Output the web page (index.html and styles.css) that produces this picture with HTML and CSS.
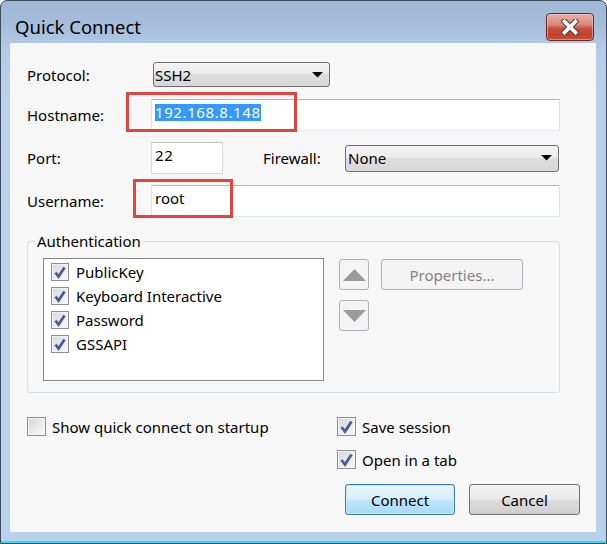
FILE: index.html
```html
<!DOCTYPE html>
<html>
<head>
<meta charset="utf-8">
<title>Quick Connect</title>
<link rel="stylesheet" href="styles.css">
</head>
<body>
<div class="window">
  <div class="titlebar">
    <span class="title">Quick Connect</span>
    <div class="close">
      <svg width="18" height="16" viewBox="0 0 18 16">
        <path d="M3.5 2.5 L14.5 13.5 M14.5 2.5 L3.5 13.5" stroke="#5a4a48" stroke-width="6" stroke-linecap="square"/>
        <path d="M3.5 2.5 L14.5 13.5 M14.5 2.5 L3.5 13.5" stroke="#ffffff" stroke-width="3.6" stroke-linecap="square"/>
      </svg>
    </div>
  </div>
  <div class="client">
    <div class="fields">
      <div class="row row-protocol">
        <span class="lbl">Protocol:</span>
        <div class="select sel-protocol"><span class="sel-text">SSH2</span><svg class="caret" width="11" height="6" viewBox="0 0 11 6"><polygon points="0,0 11,0 5.5,5.5" fill="#000"/></svg></div>
      </div>
      <div class="row">
        <span class="lbl">Hostname:</span>
        <div class="input wide"><span class="selected">192.168.8.148</span></div>
        <span class="mark mark-host"></span>
      </div>
      <div class="row">
        <span class="lbl">Port:</span>
        <div class="input port"><span class="digits">22</span></div>
        <span class="lbl-fw">Firewall:</span>
        <div class="select sel-fw"><span class="sel-text">None</span><svg class="caret" width="11" height="6" viewBox="0 0 11 6"><polygon points="0,0 11,0 5.5,5.5" fill="#000"/></svg></div>
      </div>
      <div class="row">
        <span class="lbl">Username:</span>
        <div class="input wide"><span>root</span></div>
        <span class="mark mark-user"></span>
      </div>
    </div>

    <fieldset class="group">
      <legend>Authentication</legend>
      <div class="group-body">
        <div class="listbox">
          <div class="item"><span class="cb"><svg width="18" height="18" viewBox="0 0 18 18"><polyline points="4.5,9.5 7.5,13.5 13.5,4.5" fill="none" stroke="#4b5d94" stroke-width="2.8"/></svg></span><span>PublicKey</span></div>
          <div class="item"><span class="cb"><svg width="18" height="18" viewBox="0 0 18 18"><polyline points="4.5,9.5 7.5,13.5 13.5,4.5" fill="none" stroke="#4b5d94" stroke-width="2.8"/></svg></span><span>Keyboard Interactive</span></div>
          <div class="item"><span class="cb"><svg width="18" height="18" viewBox="0 0 18 18"><polyline points="4.5,9.5 7.5,13.5 13.5,4.5" fill="none" stroke="#4b5d94" stroke-width="2.8"/></svg></span><span>Password</span></div>
          <div class="item"><span class="cb"><svg width="18" height="18" viewBox="0 0 18 18"><polyline points="4.5,9.5 7.5,13.5 13.5,4.5" fill="none" stroke="#4b5d94" stroke-width="2.8"/></svg></span><span>GSSAPI</span></div>
        </div>
        <div class="arrows">
          <div class="btn-dis arrow"><svg width="23" height="12" viewBox="0 0 23 12"><polygon points="11.5,0 23,12 0,12" fill="#9b9b9b"/></svg></div>
          <div class="btn-dis arrow"><svg width="23" height="12" viewBox="0 0 23 12"><polygon points="0,0 23,0 11.5,12" fill="#9b9b9b"/></svg></div>
        </div>
        <div class="btn-dis props">Properties...</div>
      </div>
    </fieldset>

    <div class="options">
      <div class="opt"><span class="cb cb-lg"></span><span>Show quick connect on startup</span></div>
      <div class="opt"><span class="cb cb-lg"><svg width="19" height="19" viewBox="0 0 19 19"><polyline points="4.5,10 8,14.5 14.5,4.5" fill="none" stroke="#4b5d94" stroke-width="2.8"/></svg></span><span>Save session</span></div>
      <div class="opt opt-tab"><span class="cb cb-lg"><svg width="19" height="19" viewBox="0 0 19 19"><polyline points="4.5,10 8,14.5 14.5,4.5" fill="none" stroke="#4b5d94" stroke-width="2.8"/></svg></span><span>Open in a tab</span></div>
    </div>

    <div class="buttons">
      <div class="btn btn-default">Connect</div>
      <div class="btn">Cancel</div>
    </div>
  </div>
</div>
</body>
</html>
```

FILE: styles.css
```css
html, body {
  margin: 0;
  padding: 0;
  background: #ffffff;
}

body {
  font-family: "Noto Sans", "DejaVu Sans", sans-serif;
  font-size: 15px;
  color: #000;
}

.window {
  width: 607px;
  height: 544px;
  box-sizing: border-box;
  border: 1px solid #3e4b5a;
  border-radius: 7px 7px 0 0;
  background: linear-gradient(180deg, #9fb8d6 0px, #a6bedb 25px, #b3cbe6 48px, #b9d1eb 100px, #b9d2ec 100%);
  box-shadow: inset 0 -2px 0 #4fd0ea;
  display: flex;
  flex-direction: column;
}

.titlebar {
  height: 42px;
  box-sizing: border-box;
  padding: 12px 12px 0 14px;
  display: flex;
  justify-content: space-between;
  align-items: flex-start;
}

.title {
  font-size: 18.5px;
  line-height: 24px;
  margin-top: 2px;
  color: #000;
}

.close {
  width: 48px;
  height: 28px;
  box-sizing: border-box;
  border: 1px solid #6a2c28;
  border-radius: 4px;
  background: linear-gradient(180deg, #eab0a6 0%, #dc8a7c 40%, #c9523d 55%, #c2412c 80%, #c94e37 100%);
  box-shadow: inset 0 0 0 1px rgba(255, 220, 210, 0.45);
  display: flex;
  align-items: center;
  justify-content: center;
}

.client {
  margin-left: 9px;
  width: 586px;
  height: 489px;
  box-sizing: border-box;
  background: #f7f7f7;
  padding: 19px 0 0 17px;
  display: flex;
  flex-direction: column;
}

.fields {
  width: 533px;
  display: flex;
  flex-direction: column;
  gap: 11px;
}

.row {
  position: relative;
  display: flex;
  align-items: center;
  height: 32px;
}

.row-protocol {
  height: 25px;
  margin-bottom: 1px;
}

.lbl {
  width: 124px;
  flex-shrink: 0;
  line-height: 18px;
}

.select {
  box-sizing: border-box;
  border: 1px solid #707070;
  border-radius: 3px;
  background: linear-gradient(180deg, #f3f3f3 0%, #ececec 45%, #dedede 50%, #d7d7d7 100%);
  display: flex;
  align-items: center;
  justify-content: space-between;
  padding: 0 6px 0 1px;
}

.sel-text {
  line-height: 18px;
}

.sel-protocol {
  margin-left: 2px;
  width: 177px;
  height: 25px;
}

.sel-fw {
  width: 214px;
  height: 27px;
  padding-left: 2px;
}

.input {
  box-sizing: border-box;
  height: 32px;
  background: #fff;
  border: 1px solid #e3e9ef;
  border-top-color: #abb9c8;
  border-left-color: #dde3ea;
  border-right-color: #dde3ea;
  padding: 4px 3px 0 3px;
  line-height: 17px;
  align-self: center;
}

.input span {
  display: inline-block;
  line-height: 17px;
}

.wide {
  flex: 1;
}

.port {
  width: 72px;
  border-color: #d9d9d9;
  border-top-color: #c4c4c4;
}

.selected {
  background: #3399ff;
  color: #fff;
  letter-spacing: 0.6px;
}

.digits {
  letter-spacing: 0.6px;
}

.lbl-fw {
  margin-left: 40px;
  width: 82px;
  flex-shrink: 0;
  line-height: 18px;
}

.mark {
  position: absolute;
  box-sizing: border-box;
  border: 3px solid #e5443e;
}

.mark-host {
  left: 99px;
  top: -7px;
  width: 171px;
  height: 40px;
}

.mark-user {
  left: 106px;
  top: -6px;
  width: 100px;
  height: 39px;
}

.group {
  margin: 15px 0 0 0;
  width: 533px;
  box-sizing: border-box;
  border: 1px solid #d5dfe5;
  border-radius: 3px;
  padding: 8px 0 11px 0;
  min-inline-size: 0;
}

.group legend {
  margin-left: 7px;
  padding: 0 2px;
  line-height: 18px;
}

.group-body {
  margin-left: 15px;
  display: flex;
  align-items: flex-start;
}

.listbox {
  width: 281px;
  height: 123px;
  box-sizing: border-box;
  border: 1px solid #828790;
  background: #fff;
  padding: 1px 0 0 7px;
}

.item {
  height: 24px;
  display: flex;
  align-items: center;
  gap: 7px;
  line-height: 18px;
}

.cb {
  width: 18px;
  height: 18px;
  box-sizing: border-box;
  border: 1px solid #8f8f8f;
  background: linear-gradient(135deg, #d2d5d9 0%, #e9eaec 50%, #f8f8f8 100%);
  box-shadow: inset 0 0 0 1px #f3f3f3;
  position: relative;
  flex-shrink: 0;
}

.cb svg {
  position: absolute;
  left: -1px;
  top: -1px;
}

.cb-lg {
  width: 19px;
  height: 19px;
}

.arrows {
  margin-left: 15px;
  margin-top: 1px;
  display: flex;
  flex-direction: column;
  gap: 10px;
}

.btn-dis {
  box-sizing: border-box;
  border: 1px solid #adb2b5;
  border-radius: 3px;
  background: #f4f4f4;
  color: #838383;
  display: flex;
  align-items: center;
  justify-content: center;
}

.arrow {
  width: 30px;
  height: 31px;
}

.props {
  margin-left: 12px;
  margin-top: 1px;
  width: 142px;
  height: 31px;
  line-height: 18px;
}

.options {
  margin-top: 24px;
  display: grid;
  grid-template-columns: 310px auto;
  row-gap: 14px;
}

.opt {
  display: flex;
  align-items: center;
  gap: 6px;
  height: 19px;
  line-height: 18px;
}

.opt-tab {
  grid-column: 2;
}

.buttons {
  margin-top: 15px;
  margin-right: 16px;
  display: flex;
  justify-content: flex-end;
  gap: 14px;
}

.btn {
  width: 111px;
  height: 31px;
  box-sizing: border-box;
  border: 1px solid #707070;
  border-radius: 3px;
  background: linear-gradient(180deg, #f2f2f2 0%, #ebebeb 48%, #dddddd 52%, #cfcfcf 100%);
  display: flex;
  align-items: center;
  justify-content: center;
  line-height: 18px;
}

.btn-default {
  width: 110px;
  border-color: #3c7fb1;
  background: linear-gradient(180deg, #eaf6fd 0%, #d9f0fc 48%, #bee6fd 52%, #a7d9f5 100%);
  box-shadow: inset 0 0 0 1px #c7e6f7;
}
```
